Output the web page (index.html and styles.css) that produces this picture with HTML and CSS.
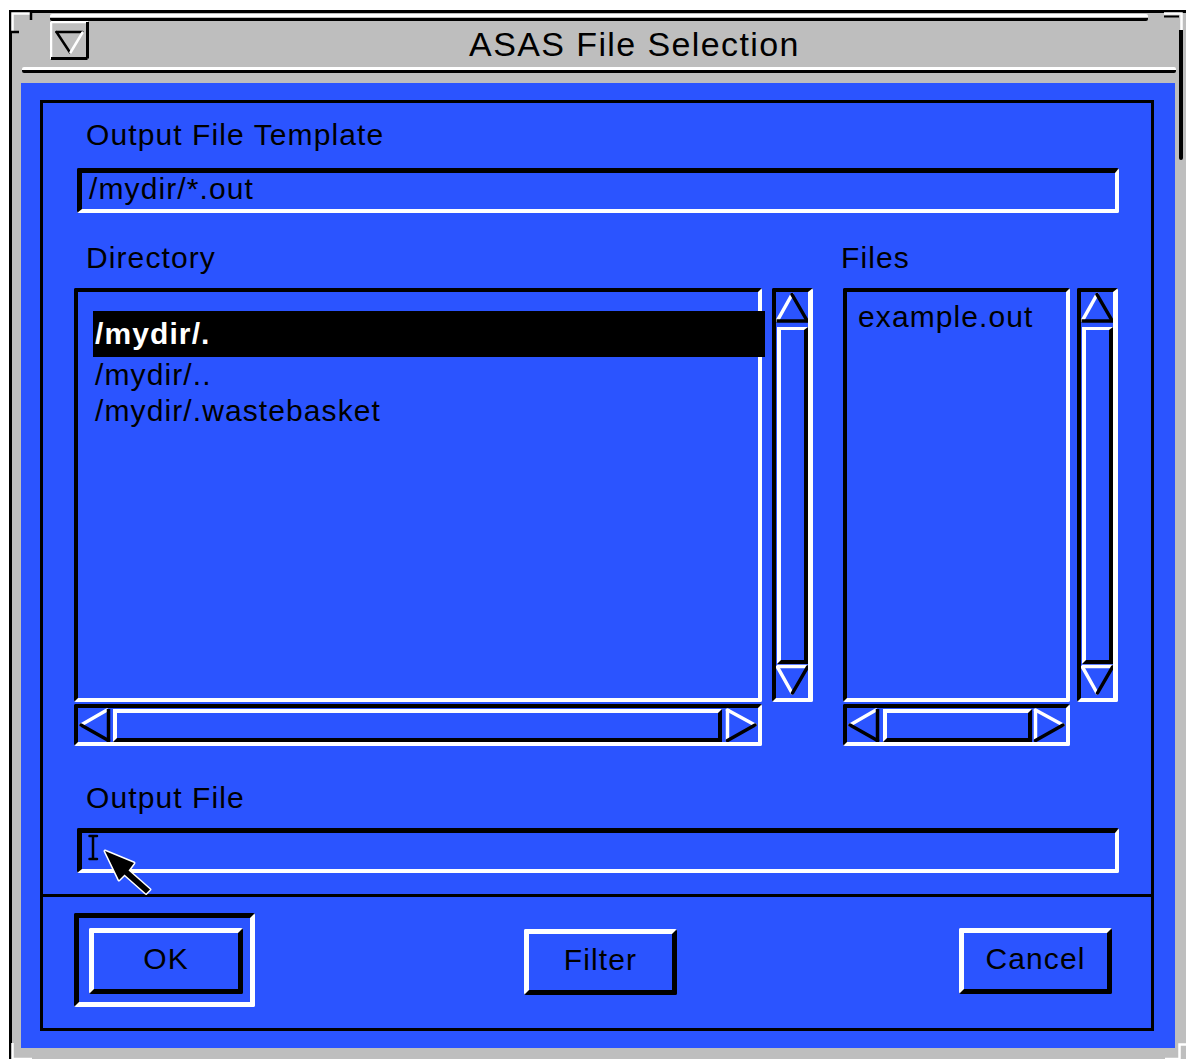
FILE: index.html
```html
<!DOCTYPE html>
<html lang="en">
<head>
<meta charset="utf-8">
<title>ASAS File Selection</title>
<link rel="stylesheet" href="styles.css">
</head>
<body>
<div class="window">
  <svg class="corner corner-tl" width="22" height="22" viewBox="0 0 22 22">
    <polyline points="1.5,21 1.5,1.5 21,1.5" fill="none" stroke="#fff" stroke-width="2.5"/>
    <line x1="20" y1="0" x2="20" y2="8" stroke="#000" stroke-width="2.5"/>
    <line x1="0" y1="20" x2="8" y2="20" stroke="#000" stroke-width="2.5"/>
  </svg>
  <svg class="corner corner-tr" width="24" height="22" viewBox="0 0 24 22">
    <polyline points="0,1.5 17.5,1.5 17.5,21" fill="none" stroke="#fff" stroke-width="2.5"/>
    <line x1="0" y1="4.5" x2="15" y2="4.5" stroke="#000" stroke-width="2"/>
  </svg>
  <div class="edge-right"></div>
  <svg class="corner corner-bl" width="22" height="22" viewBox="0 0 22 22">
    <polyline points="1.5,0 1.5,16 21,16" fill="none" stroke="#fff" stroke-width="2.5"/>
  </svg>
  <svg class="corner corner-br" width="22" height="22" viewBox="0 0 22 22">
    <polyline points="0,16 14.5,16 14.5,1.5 21,1.5" fill="none" stroke="#fff" stroke-width="2.5"/>
  </svg>

  <div class="title-groove"></div>
  <div class="titlebar">
    <svg class="menu-btn" width="39" height="39" viewBox="0 0 39 39">
      <rect x="0" y="0" width="39" height="39" fill="#bebebe"/>
      <line x1="1" y1="1" x2="38" y2="1" stroke="#fff" stroke-width="2.5"/>
      <line x1="1" y1="1" x2="1" y2="38" stroke="#fff" stroke-width="2.5"/>
      <line x1="37.5" y1="1" x2="37.5" y2="37.5" stroke="#000" stroke-width="3"/>
      <line x1="1" y1="37.5" x2="37.5" y2="37.5" stroke="#000" stroke-width="3"/>
      <line x1="6.5" y1="11" x2="32.5" y2="11" stroke="#000" stroke-width="2.5" stroke-linecap="round"/>
      <line x1="6.5" y1="11" x2="20" y2="31.5" stroke="#000" stroke-width="2.5" stroke-linecap="round"/>
      <line x1="32.5" y1="11.5" x2="20.5" y2="31.5" stroke="#fff" stroke-width="2.5" stroke-linecap="round"/>
    </svg>
    <div class="title">ASAS File Selection</div>
  </div>
  <div class="title-ridge"></div>

  <div class="client">
    <div class="frame">
      <div class="form">
        <div class="label">Output File Template</div>
        <div class="field">/mydir/*.out</div>

        <div class="labels-row">
          <div class="label dir-label">Directory</div>
          <div class="label">Files</div>
        </div>

        <div class="lists">
          <div class="pane dir-pane">
            <div class="list dir-list">
              <div class="item selected">/mydir/.</div>
              <div class="item">/mydir/..</div>
              <div class="item">/mydir/.wastebasket</div>
            </div>
            <div class="vscroll">
              <svg class="arrow" width="32" height="34" viewBox="0 0 32 34">
                <line x1="1.5" y1="28.5" x2="16" y2="2.5" stroke="#fff" stroke-width="3.5" stroke-linecap="round"/>
                <line x1="16" y1="2.5" x2="31" y2="28.5" stroke="#000" stroke-width="3.5" stroke-linecap="round"/>
                <line x1="0.5" y1="29" x2="32" y2="29" stroke="#000" stroke-width="3.5"/>
              </svg>
              <div class="vthumb"></div>
              <svg class="arrow" width="32" height="34" viewBox="0 0 32 34">
                <line x1="1" y1="2.5" x2="31.5" y2="2.5" stroke="#fff" stroke-width="3.5"/>
                <line x1="1.5" y1="3" x2="16" y2="29" stroke="#fff" stroke-width="3.5" stroke-linecap="round"/>
                <line x1="31.5" y1="3" x2="16.5" y2="29" stroke="#000" stroke-width="3.5" stroke-linecap="round"/>
              </svg>
            </div>
            <div class="hscroll">
              <svg class="arrow" width="34" height="34" viewBox="0 0 34 34">
                <line x1="3" y1="17" x2="29" y2="2" stroke="#fff" stroke-width="3.5" stroke-linecap="round"/>
                <line x1="3" y1="17" x2="30.5" y2="32.5" stroke="#000" stroke-width="3.5" stroke-linecap="round"/>
                <line x1="30.5" y1="1" x2="30.5" y2="34" stroke="#000" stroke-width="3.5"/>
              </svg>
              <div class="hthumb"></div>
              <svg class="arrow" width="34" height="34" viewBox="0 0 34 34">
                <line x1="3.5" y1="1" x2="3.5" y2="33" stroke="#fff" stroke-width="3.5"/>
                <line x1="3.5" y1="2" x2="31" y2="17" stroke="#fff" stroke-width="3.5" stroke-linecap="round"/>
                <line x1="3.5" y1="32.5" x2="31" y2="17" stroke="#000" stroke-width="3.5" stroke-linecap="round"/>
              </svg>
            </div>
          </div>

          <div class="pane files-pane">
            <div class="list files-list">
              <div class="item">example.out</div>
            </div>
            <div class="vscroll">
              <svg class="arrow" width="32" height="34" viewBox="0 0 32 34">
                <line x1="1.5" y1="28.5" x2="16" y2="2.5" stroke="#fff" stroke-width="3.5" stroke-linecap="round"/>
                <line x1="16" y1="2.5" x2="31" y2="28.5" stroke="#000" stroke-width="3.5" stroke-linecap="round"/>
                <line x1="0.5" y1="29" x2="32" y2="29" stroke="#000" stroke-width="3.5"/>
              </svg>
              <div class="vthumb"></div>
              <svg class="arrow" width="32" height="34" viewBox="0 0 32 34">
                <line x1="1" y1="2.5" x2="31.5" y2="2.5" stroke="#fff" stroke-width="3.5"/>
                <line x1="1.5" y1="3" x2="16" y2="29" stroke="#fff" stroke-width="3.5" stroke-linecap="round"/>
                <line x1="31.5" y1="3" x2="16.5" y2="29" stroke="#000" stroke-width="3.5" stroke-linecap="round"/>
              </svg>
            </div>
            <div class="hscroll">
              <svg class="arrow" width="34" height="34" viewBox="0 0 34 34">
                <line x1="3" y1="17" x2="29" y2="2" stroke="#fff" stroke-width="3.5" stroke-linecap="round"/>
                <line x1="3" y1="17" x2="30.5" y2="32.5" stroke="#000" stroke-width="3.5" stroke-linecap="round"/>
                <line x1="30.5" y1="1" x2="30.5" y2="34" stroke="#000" stroke-width="3.5"/>
              </svg>
              <div class="hthumb"></div>
              <svg class="arrow" width="34" height="34" viewBox="0 0 34 34">
                <line x1="3.5" y1="1" x2="3.5" y2="33" stroke="#fff" stroke-width="3.5"/>
                <line x1="3.5" y1="2" x2="31" y2="17" stroke="#fff" stroke-width="3.5" stroke-linecap="round"/>
                <line x1="3.5" y1="32.5" x2="31" y2="17" stroke="#000" stroke-width="3.5" stroke-linecap="round"/>
              </svg>
            </div>
          </div>
        </div>

        <div class="label output-label">Output File</div>
        <div class="field output-field">
          <svg class="pointer" width="80" height="75" viewBox="0 0 80 75">
            <line x1="11" y1="2.5" x2="11" y2="26.5" stroke="#000" stroke-width="2.5"/>
            <line x1="7.5" y1="3" x2="15" y2="3" stroke="#000" stroke-width="2.5" stroke-linecap="round"/>
            <line x1="7.5" y1="26" x2="15" y2="26" stroke="#000" stroke-width="2.5" stroke-linecap="round"/>
            <polygon points="23,18 37,47 42.5,41.5 64,60.5 68,56.5 46.5,37.5 52,30" fill="#000" stroke="#fff" stroke-width="3" stroke-linejoin="round" paint-order="stroke"/>
          </svg>
        </div>
      </div>

      <div class="actions">
        <div class="default-frame">
          <div class="btn">OK</div>
        </div>
        <div class="btn btn-filter">Filter</div>
        <div class="btn btn-cancel">Cancel</div>
      </div>
    </div>
  </div>
</div>
</body>
</html>
```
FILE: styles.css
```css
* {
  box-sizing: border-box;
}

html,
body {
  margin: 0;
  padding: 0;
}

body {
  width: 1186px;
  height: 1059px;
  overflow: hidden;
  background: #fff;
  font-family: "Liberation Sans", Arial, Helvetica, sans-serif;
  color: #000;
}

/* ---------- window frame ---------- */
.window {
  position: relative;
  margin: 10px 0 0 9px;
  width: 1177px;
  height: 1060px;
  background: #bebebe;
  border-top: 3px solid #000;
  border-left: 3px solid #000;
}

.corner {
  position: absolute;
  display: block;
}

.corner-tl { left: -1px; top: -1px; }
.corner-tr { left: 1152px; top: -1px; }
.corner-bl { left: -1px; top: 1030px; }
.corner-br { left: 1153px; top: 1030px; }

/* short black stretch of the right frame under the resize corner */
.edge-right {
  position: absolute;
  left: 1167px;
  top: 17px;
  width: 4px;
  height: 130px;
  background: #000;
  border-radius: 0 0 2px 2px;
}

.title-groove {
  margin: 1px 0 0 38px;
  width: 1098px;
  height: 7px;
  border-top: 3px solid #fff;
  border-bottom: 3px solid #000;
  border-radius: 2px;
}

.titlebar {
  display: flex;
  width: 1168px;
  height: 46px;
  padding-left: 38px;
}

.menu-btn {
  display: block;
  flex: none;
}

.title {
  flex: 1;
  text-align: center;
  font-size: 34px;
  letter-spacing: 1.4px;
  line-height: 46px;
}

.title-ridge {
  margin-left: 10px;
  width: 1154px;
  height: 6px;
  border-top: 3px solid #fff;
  border-bottom: 3px solid #000;
  border-radius: 2px;
}

/* ---------- blue client area ---------- */
.client {
  margin: 10px 0 0 9px;
  width: 1154px;
  height: 965px;
  background: #2b54ff;
  padding: 17px 0 0 19px;
}

.frame {
  width: 1114px;
  height: 931px;
  border: 3px solid #000;
  display: flex;
  flex-direction: column;
}

.form {
  height: 791px;
  padding: 15px 32px 0 34px;
}

.label {
  font-size: 30px;
  line-height: 34px;
  letter-spacing: 1.1px;
  padding-left: 9px;
  white-space: nowrap;
}

/* sunken text field */
.field {
  position: relative;
  margin-top: 16px;
  height: 45px;
  border-style: solid;
  border-width: 5px 4px 4px 5px;
  border-color: #000 #fff #fff #000;
  border-radius: 2px;
  padding-left: 7px;
  font-size: 30px;
  line-height: 32px;
  letter-spacing: 1.1px;
}

.labels-row {
  display: flex;
  margin-top: 28px;
}

.dir-label {
  width: 755px;
}

/* ---------- lists ---------- */
.lists {
  display: flex;
  margin: 13px 0 0 -3px;
}

.pane {
  display: grid;
  grid-template-rows: 414px 42px;
  row-gap: 2px;
}

.dir-pane {
  grid-template-columns: 688px 41px;
  column-gap: 10px;
}

.files-pane {
  margin-left: 30px;
  grid-template-columns: 227px 41px;
  column-gap: 7px;
}

.list {
  border-style: solid;
  border-width: 4px;
  border-color: #000 #fff #fff #000;
  border-radius: 2px;
}

.dir-list {
  padding: 19px 0 0 15px;
}

.files-list {
  padding: 7px 0 0 9px;
}

.item {
  font-size: 30px;
  line-height: 36px;
  letter-spacing: 1.1px;
  padding-left: 2px;
  white-space: nowrap;
}

.item.selected {
  background: #000;
  color: #fff;
  font-weight: bold;
  padding: 5px 2px;
  margin-right: -7px;
}

.vscroll {
  display: flex;
  flex-direction: column;
  border-style: solid;
  border-width: 4px 5px 4px 4px;
  border-color: #000 #fff #fff #000;
  border-radius: 2px;
}

.hscroll {
  grid-column: 1;
  display: flex;
  border-style: solid;
  border-width: 4px;
  border-color: #000 #fff #fff #000;
  border-radius: 2px;
}

.arrow {
  display: block;
  flex: none;
}

.vthumb {
  flex: 1;
  margin: 1px 0 0 1px;
  border-style: solid;
  border-width: 3px 4px 4px 4px;
  border-color: #fff #000 #000 #fff;
}

.hthumb {
  flex: 1;
  margin: 1px 2px 0 1px;
  border-style: solid;
  border-width: 4px;
  border-color: #fff #000 #000 #fff;
}

.files-pane .hthumb {
  margin: 1px 0 0 2px;
}

.output-label {
  margin-top: 35px;
}

.output-field {
  margin-top: 13px;
}

.pointer {
  position: absolute;
  left: 0;
  top: 0;
  overflow: visible;
}

/* ---------- button row ---------- */
.actions {
  flex: 1;
  display: flex;
  align-items: flex-start;
  border-top: 3px solid #000;
  padding: 16px 0 0 31px;
}

.default-frame {
  width: 181px;
  height: 94px;
  border-style: solid;
  border-width: 5px;
  border-color: #000 #fff #fff #000;
  border-radius: 2px;
  padding: 10px 0 0 10px;
}

.btn {
  width: 154px;
  height: 66px;
  border-style: solid;
  border-width: 5px;
  border-color: #fff #000 #000 #fff;
  border-radius: 2px;
  text-align: center;
  font-size: 30px;
  line-height: 51px;
  letter-spacing: 1.1px;
}

.btn-filter {
  width: 153px;
  margin: 16px 0 0 269px;
}

.btn-cancel {
  width: 153px;
  margin: 15px 0 0 282px;
}
```
